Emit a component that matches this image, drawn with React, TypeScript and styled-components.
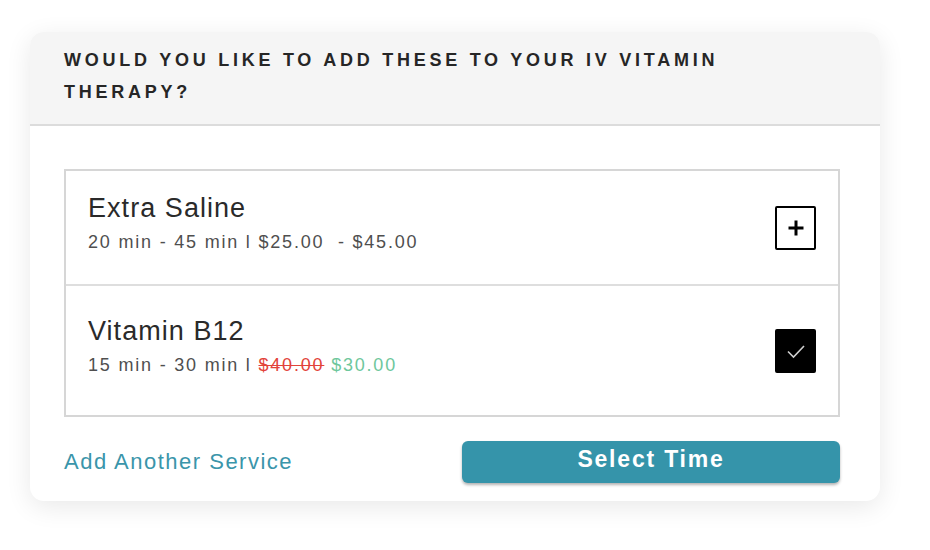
import React from "react";
import styled, { createGlobalStyle } from "styled-components";

const Global = createGlobalStyle`
    body {
        margin: 0;
        background: #fff;
        font-family: "Liberation Sans", Arial, sans-serif;
    }
`;

const Page = styled.div`
    padding: 32px 50px 49px 30px;
`;

const Card = styled.div`
    width: 850px;
    background: #fff;
    border-radius: 14px;
    overflow: hidden;
    box-shadow: 0 6px 26px rgba(0, 0, 0, 0.09);
`;

const Header = {
    Root: styled.div`
        background: #f5f5f5;
        border-bottom: 2px solid #dcdcdc;
        padding: 12px 34px 16px;
    `,
    Title: styled.h2`
        margin: 0;
        max-width: 730px;
        font-size: 18px;
        line-height: 32px;
        font-weight: 700;
        letter-spacing: 3.75px;
        text-transform: uppercase;
        color: #262626;
    `
};

const Body = styled.div`
    padding: 43px 40px 18px 34px;
`;

const List = styled.div`
    border: 2px solid #d6d6d6;
`;

const Item = {
    Root: styled.div<{ $height: number }>`
        display: flex;
        align-items: center;
        justify-content: space-between;
        height: ${p => p.$height}px;
        padding: 0 22px;
        box-sizing: border-box;
        & + & {
            border-top: 2px solid #dedede;
        }
    `,
    Text: styled.div`
        margin-bottom: 9px;
    `,
    Name: styled.div`
        font-size: 27px;
        letter-spacing: 1.05px;
        color: #2a2a2a;
        line-height: 30px;
    `,
    Meta: styled.div`
        margin-top: 8px;
        font-size: 18px;
        letter-spacing: 1.8px;
        color: #4f4f4f;
        line-height: 22px;
    `,
    Old: styled.span`
        color: #e2433a;
        text-decoration: line-through;
    `,
    New: styled.span`
        color: #6ec79c;
    `
};

const Check = styled.div<{ $on?: boolean }>`
    width: 41px;
    height: 44px;
    box-sizing: border-box;
    border: 2px solid #000;
    border-radius: 2px;
    background: ${p => (p.$on ? "#000" : "#fff")};
    display: flex;
    align-items: center;
    justify-content: center;
`;

const Footer = styled.div`
    display: flex;
    align-items: center;
    justify-content: space-between;
    margin-top: 24px;
`;

const Link = styled.a`
    font-size: 22px;
    letter-spacing: 1.5px;
    color: #3a95aa;
    text-decoration: none;
    cursor: pointer;
`;

const Button = styled.button`
    width: 378px;
    height: 42px;
    border: none;
    border-radius: 6px;
    background: #3594aa;
    color: #fff;
    font-family: "Liberation Sans", Arial, sans-serif;
    font-size: 23px;
    font-weight: 700;
    letter-spacing: 1.8px;
    padding: 0 0 5px;
    box-shadow: 0 2px 3px rgba(0, 0, 0, 0.3);
    cursor: pointer;
`;

const PlusIcon = () => (
    <svg width="20" height="20" viewBox="0 0 20 20">
        <path d="M10 2.5v15M2.5 10h15" stroke="#000" strokeWidth="3" />
    </svg>
);

const CheckIcon = () => (
    <svg width="22" height="18" viewBox="0 0 22 18">
        <path d="M3 9.5l5.5 5.5L19 4" fill="none" stroke="#cfcfcf" strokeWidth="1.6" />
    </svg>
);

export default function App() {
    return (
        <Page>
            <Global />
            <Card>
                <Header.Root>
                    <Header.Title>Would you like to add these to your IV Vitamin Therapy?</Header.Title>
                </Header.Root>
                <Body>
                    <List>
                        <Item.Root $height={113}>
                            <Item.Text>
                                <Item.Name>Extra Saline</Item.Name>
                                <Item.Meta>20 min - 45 min l $25.00 &nbsp;- $45.00</Item.Meta>
                            </Item.Text>
                            <Check>
                                <PlusIcon />
                            </Check>
                        </Item.Root>
                        <Item.Root $height={131}>
                            <Item.Text>
                                <Item.Name>Vitamin B12</Item.Name>
                                <Item.Meta>
                                    15 min - 30 min l <Item.Old>$40.00</Item.Old> <Item.New>$30.00</Item.New>
                                </Item.Meta>
                            </Item.Text>
                            <Check $on>
                                <CheckIcon />
                            </Check>
                        </Item.Root>
                    </List>
                    <Footer>
                        <Link>Add Another Service</Link>
                        <Button>Select Time</Button>
                    </Footer>
                </Body>
            </Card>
        </Page>
    );
}
